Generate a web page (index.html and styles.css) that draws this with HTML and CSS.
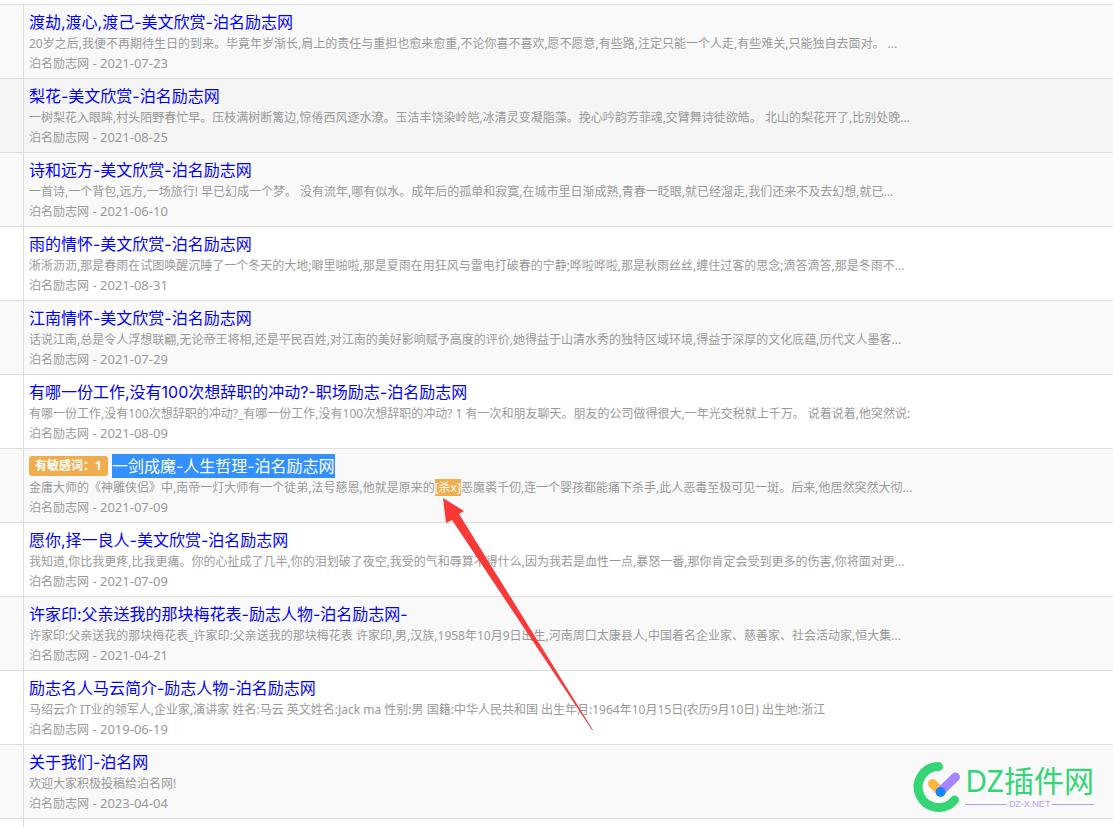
FILE: index.html
```html
<!DOCTYPE html>
<html lang="zh-CN">
<head>
<meta charset="utf-8">
<title>泊名励志网</title>
<link rel="stylesheet" href="styles.css">
</head>
<body>
<table class="results">
<tbody>
<tr class="row"><td class="check"></td><td class="entry"><a class="title" href="#">渡劫,渡心,渡己-美文欣赏-泊名励志网</a><p class="desc">20岁之后,我便不再期待生日的到来。毕竟年岁渐长,肩上的责任与重担也愈来愈重,不论你喜不喜欢,愿不愿意,有些路,注定只能一个人走,有些难关,只能独自去面对。 ...</p><p class="meta">泊名励志网<span class="date"> - 2021-07-23</span></p></td></tr>
<tr class="row active"><td class="check"></td><td class="entry"><a class="title" href="#">梨花-美文欣赏-泊名励志网</a><p class="desc">一树梨花入眼眸,村头陌野春忙早。压枝满树断篱边,惊倦西风逐水潦。玉洁丰饶染岭皑,冰清灵变凝脂藻。挽心吟韵芳菲魂,交臂舞诗徒欲皓。 北山的梨花开了,比别处晚...</p><p class="meta">泊名励志网<span class="date"> - 2021-08-25</span></p></td></tr>
<tr class="row"><td class="check"></td><td class="entry"><a class="title" href="#">诗和远方-美文欣赏-泊名励志网</a><p class="desc">一首诗,一个背包,远方,一场旅行! 早已幻成一个梦。 没有流年,哪有似水。成年后的孤单和寂寞,在城市里日渐成熟,青春一眨眼,就已经溜走,我们还来不及去幻想,就已...</p><p class="meta">泊名励志网<span class="date"> - 2021-06-10</span></p></td></tr>
<tr class="row"><td class="check"></td><td class="entry"><a class="title" href="#">雨的情怀-美文欣赏-泊名励志网</a><p class="desc">淅淅沥沥,那是春雨在试图唤醒沉睡了一个冬天的大地;噼里啪啦,那是夏雨在用狂风与雷电打破春的宁静;哗啦哗啦,那是秋雨丝丝,缠住过客的思念;滴答滴答,那是冬雨不...</p><p class="meta">泊名励志网<span class="date"> - 2021-08-31</span></p></td></tr>
<tr class="row"><td class="check"></td><td class="entry"><a class="title" href="#">江南情怀-美文欣赏-泊名励志网</a><p class="desc">话说江南,总是令人浮想联翩,无论帝王将相,还是平民百姓,对江南的美好影响赋予高度的评价,她得益于山清水秀的独特区域环境,得益于深厚的文化底蕴,历代文人墨客...</p><p class="meta">泊名励志网<span class="date"> - 2021-07-29</span></p></td></tr>
<tr class="row"><td class="check"></td><td class="entry"><a class="title" href="#">有哪一份工作,没有100次想辞职的冲动?-职场励志-泊名励志网</a><p class="desc">有哪一份工作,没有100次想辞职的冲动?_有哪一份工作,没有100次想辞职的冲动? 1 有一次和朋友聊天。朋友的公司做得很大,一年光交税就上千万。 说着说着,他突然说:</p><p class="meta">泊名励志网<span class="date"> - 2021-08-09</span></p></td></tr>
<tr class="row"><td class="check"></td><td class="entry"><div class="flagged"><span class="badge">有敏感词：1</span><a class="title selected" href="#">一剑成魔-人生哲理-泊名励志网</a></div><p class="desc">金庸大师的《神雕侠侣》中,南帝一灯大师有一个徒弟,法号慈恩,他就是原来的<mark class="word">[杀x]</mark>恶魔裘千仞,连一个婴孩都能痛下杀手,此人恶毒至极可见一斑。后来,他居然突然大彻...</p><p class="meta">泊名励志网<span class="date"> - 2021-07-09</span></p></td></tr>
<tr class="row"><td class="check"></td><td class="entry"><a class="title" href="#">愿你,择一良人-美文欣赏-泊名励志网</a><p class="desc">我知道,你比我更疼,比我更痛。你的心扯成了几半,你的泪划破了夜空,我受的气和辱算不得什么,因为我若是血性一点,暴怒一番,那你肯定会受到更多的伤害,你将面对更...</p><p class="meta">泊名励志网<span class="date"> - 2021-07-09</span></p></td></tr>
<tr class="row"><td class="check"></td><td class="entry"><a class="title" href="#">许家印:父亲送我的那块梅花表-励志人物-泊名励志网-</a><p class="desc">许家印:父亲送我的那块梅花表_许家印:父亲送我的那块梅花表 许家印,男,汉族,1958年10月9日出生,河南周口太康县人,中国着名企业家、慈善家、社会活动家,恒大集...</p><p class="meta">泊名励志网<span class="date"> - 2021-04-21</span></p></td></tr>
<tr class="row"><td class="check"></td><td class="entry"><a class="title" href="#">励志名人马云简介-励志人物-泊名励志网</a><p class="desc">马绍云介 IT业的领军人,企业家,演讲家 姓名:马云 英文姓名:Jack ma 性别:男 国籍:中华人民共和国 出生年月:1964年10月15日(农历9月10日) 出生地:浙江</p><p class="meta">泊名励志网<span class="date"> - 2019-06-19</span></p></td></tr>
<tr class="row"><td class="check"></td><td class="entry"><a class="title" href="#">关于我们-泊名网</a><p class="desc">欢迎大家积极投稿给泊名网!</p><p class="meta">泊名励志网<span class="date"> - 2023-04-04</span></p></td></tr>
<tr class="row"><td class="check"></td><td class="entry"></td></tr>
</tbody>
</table>
<svg class="arrow" width="150" height="233" viewBox="0 0 150 233" aria-hidden="true"><path d="M0 0 21 13 16 16 150 232 149 232 9 22 3 25Z" fill="#fb3838"/></svg>
<div class="brand">
<svg class="brand-icon" width="50" height="50" viewBox="0 0 50 50" fill="none" stroke-width="9" stroke-linecap="round" aria-hidden="true"><path d="M25.500 4.500A20.500 20.500 0 1 0 41.500 38" stroke="#34d574"/><path d="M19.500 21.500 27 29" stroke="#ffb83f"/><path d="M27.500 29.500 42.500 15" stroke="#a585ff"/><circle cx="27.500" cy="30" r="5" fill="#1684fc"/></svg>
<div class="brand-text"><span class="brand-name">DZ插件网</span><span class="brand-site">DZ-X.NET</span></div>
</div>
</body>
</html>
```
FILE: styles.css
```css
body {
  margin: 0;
  position: relative;
  min-height: 100vh;
  overflow: hidden;
  background: #fff;
  font-family: "Noto Sans", "Noto Sans CJK SC", sans-serif;
  font-size: 12px;
  line-height: 20px;
  color: #999;
}

.results {
  width: 100%;
  border-collapse: separate;
  border-spacing: 0;
  border-top: 4px solid #fff;
}

.check,
.entry {
  padding: 5px 5px 4px;
  border-top: 1px solid #ddd;
  vertical-align: top;
}

.check {
  width: 13px;
  border-right: 1px solid #ddd;
}

.row:nth-child(odd) {
  background: #f9f9f9;
}

.row.active {
  background: #f5f5f5;
}

.title {
  display: block;
  width: fit-content;
  font-family: Inter, "Noto Sans CJK SC", sans-serif;
  font-size: 16px;
  line-height: 24px;
  color: #00f;
  text-decoration: none;
  white-space: nowrap;
}

.desc,
.meta {
  margin: 0;
  white-space: nowrap;
}

.date {
  font-size: 13px;
  line-height: 16px;
}

.flagged {
  display: flex;
  align-items: center;
  gap: 4px;
}

.badge {
  padding: 0 6px;
  border-radius: 3px;
  background: #f0ad4e;
  color: #fff;
  font-weight: 700;
}

.selected {
  background: #3390ff;
  color: #fff;
}

.word {
  background: #f0ad4e;
  color: #fff;
}

.arrow {
  position: absolute;
  left: 443px;
  top: 498px;
}

.brand {
  position: absolute;
  right: 19px;
  top: 762px;
  display: flex;
  gap: 2px;
}

.brand-text {
  display: flex;
  flex-direction: column;
}

.brand-name {
  font-size: 30px;
  line-height: 37px;
  color: #34d574;
}

.brand-site {
  display: flex;
  align-items: center;
  gap: 2px;
  font-family: "Liberation Sans", sans-serif;
  font-size: 9px;
  line-height: 10px;
  color: #b49bfa;
}

.brand-site::before,
.brand-site::after {
  content: "";
  flex: 1;
  height: 1px;
  background: #b49bfa;
}
```
